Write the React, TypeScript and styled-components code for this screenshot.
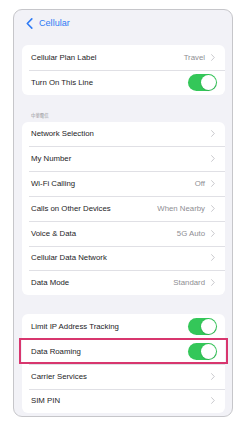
import React from 'react';
import styled, { createGlobalStyle } from 'styled-components';

const GlobalStyle = createGlobalStyle`
    html, body {
        margin: 0;
        padding: 0;
        background: #ffffff;
        font-family: 'Liberation Sans', Arial, sans-serif;
    }
`;

const Page = styled.div`
    padding: 9px 0 0 13px;
`;

const Frame = styled.div`
    width: 203px;
    height: 406px;
    padding: 0 7px 0 8px;
    border: 1px solid #c6c6ca;
    border-radius: 9px;
    background: #f2f2f7;
    overflow: hidden;
`;

const NavBar = styled.div`
    display: flex;
    align-items: center;
    gap: 6px;
    height: 26px;
    padding-left: 4px;
    margin-bottom: 9px;
    color: #2f7bf5;
    font-size: 9.1px;
`;

const SectionHeader = styled.div`
    height: 6px;
    margin: 17px 0 4px;
    padding-left: 9px;
    line-height: 6px;
    font-size: 4.4px;
    color: #8e8e93;
    font-family: 'Noto Sans CJK TC', sans-serif;
`;

const Group = styled.div<{ $gap?: number }>`
    margin-top: ${p => (p.$gap !== undefined ? `${p.$gap}px` : '0')};
    border-radius: 6px;
    background: #ffffff;
`;

const Row = styled.div`
    position: relative;
    display: flex;
    align-items: center;
    justify-content: space-between;
    height: 24.8px;
    padding: 0 9px;
    font-size: 7.8px;
    color: #1c1c1e;

    & + &:before {
        content: '';
        position: absolute;
        top: 0;
        left: 7px;
        right: 0;
        height: 0.5px;
        background: #e0e0e5;
    }
`;

const Trailing = styled.div`
    display: flex;
    align-items: center;
    gap: 6px;
    padding-right: 1px;
    color: #8e8e93;
`;

const Toggle = styled.div`
    position: relative;
    width: 29px;
    height: 17px;
    margin-right: -1px;
    border-radius: 9px;
    background: #34c759;

    &:after {
        content: '';
        position: absolute;
        top: 1px;
        right: 1px;
        width: 15px;
        height: 15px;
        border-radius: 50%;
        background: #ffffff;
        box-shadow: 0 0.5px 1.5px rgba(0, 0, 0, 0.18);
    }
`;

const Highlight = styled.div`
    position: absolute;
    top: -1px;
    bottom: 0;
    left: -3px;
    right: -3px;
    border: 2px solid #d8366e;
    pointer-events: none;
`;

const Chevron = () => (
    <svg width="4" height="7" viewBox="0 0 4 7">
        <path d="M0.6 0.6 L3.3 3.5 L0.6 6.4" fill="none" stroke="#c4c4c8" strokeWidth="0.9" strokeLinecap="round" strokeLinejoin="round" />
    </svg>
);

const BackIcon = () => (
    <svg width="7" height="11" viewBox="0 0 7 11">
        <path d="M5.8 0.9 L1.3 5.5 L5.8 10.1" fill="none" stroke="#2f7bf5" strokeWidth="1.6" strokeLinecap="round" strokeLinejoin="round" />
    </svg>
);

interface Item {
    label: string;
    value?: string;
    toggle?: boolean;
    highlight?: boolean;
}

const planItems: Item[] = [
    { label: 'Cellular Plan Label', value: 'Travel' },
    { label: 'Turn On This Line', toggle: true },
];

const carrierItems: Item[] = [
    { label: 'Network Selection' },
    { label: 'My Number' },
    { label: 'Wi-Fi Calling', value: 'Off' },
    { label: 'Calls on Other Devices', value: 'When Nearby' },
    { label: 'Voice & Data', value: '5G Auto' },
    { label: 'Cellular Data Network' },
    { label: 'Data Mode', value: 'Standard' },
];

const dataItems: Item[] = [
    { label: 'Limit IP Address Tracking', toggle: true },
    { label: 'Data Roaming', toggle: true, highlight: true },
    { label: 'Carrier Services' },
    { label: 'SIM PIN' },
];

const renderRow = (item: Item, idx: number) => (
    <Row key={idx}>
        <span>{item.label}</span>
        {item.toggle ? (
            <Toggle />
        ) : (
            <Trailing>
                {item.value && <span>{item.value}</span>}
                <Chevron />
            </Trailing>
        )}
        {item.highlight && <Highlight />}
    </Row>
);

const App = () => (
    <Page>
        <GlobalStyle />
        <Frame>
            <NavBar>
                <BackIcon />
                <span>Cellular</span>
            </NavBar>
            <Group>{planItems.map(renderRow)}</Group>
            <SectionHeader>中華電信</SectionHeader>
            <Group>{carrierItems.map(renderRow)}</Group>
            <Group $gap={19}>{dataItems.map(renderRow)}</Group>
        </Frame>
    </Page>
);

export default App;
